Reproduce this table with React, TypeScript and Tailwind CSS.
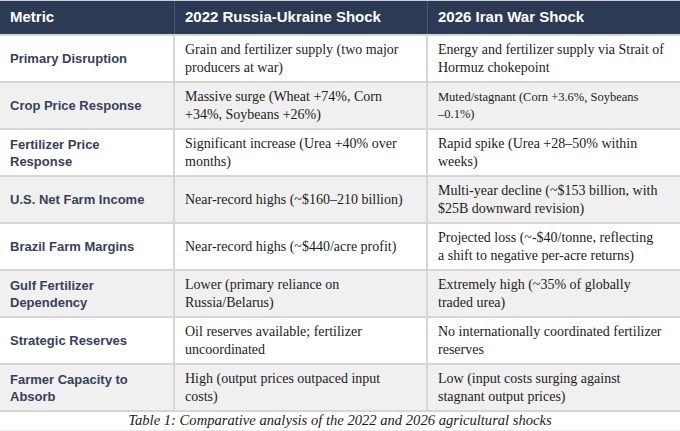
import React from "react";

type Row = { metric: string[]; a: string[]; b: string[]; bSmall?: boolean };

const rows: Row[] = [
  {
    metric: ["Primary Disruption"],
    a: ["Grain and fertilizer supply (two major", "producers at war)"],
    b: ["Energy and fertilizer supply via Strait of", "Hormuz chokepoint"],
  },
  {
    metric: ["Crop Price Response"],
    a: ["Massive surge (Wheat +74%, Corn", "+34%, Soybeans +26%)"],
    b: ["Muted/stagnant (Corn +3.6%, Soybeans", "\u20130.1%)"],
    bSmall: true,
  },
  {
    metric: ["Fertilizer Price", "Response"],
    a: ["Significant increase (Urea +40% over", "months)"],
    b: ["Rapid spike (Urea +28\u201350% within", "weeks)"],
  },
  {
    metric: ["U.S. Net Farm Income"],
    a: ["Near-record highs (~$160\u2013210 billion)"],
    b: ["Multi-year decline (~$153 billion, with", "$25B downward revision)"],
  },
  {
    metric: ["Brazil Farm Margins"],
    a: ["Near-record highs (~$440/acre profit)"],
    b: ["Projected loss (~-$40/tonne, reflecting", "a shift to negative per-acre returns)"],
  },
  {
    metric: ["Gulf Fertilizer", "Dependency"],
    a: ["Lower (primary reliance on", "Russia/Belarus)"],
    b: ["Extremely high (~35% of globally", "traded urea)"],
  },
  {
    metric: ["Strategic Reserves"],
    a: ["Oil reserves available; fertilizer", "uncoordinated"],
    b: ["No internationally coordinated fertilizer", "reserves"],
  },
  {
    metric: ["Farmer Capacity to", "Absorb"],
    a: ["High (output prices outpaced input", "costs)"],
    b: ["Low (input costs surging against", "stagnant output prices)"],
  },
];

const sans = "font-['Liberation_Sans',Arial,sans-serif]";
const serif = "font-['Liberation_Serif','Times_New_Roman',serif]";

function Lines({ lines }: { lines: string[] }) {
  return (
    <>
      {lines.map((l, i) => (
        <span key={i} className="block whitespace-nowrap">
          {l}
        </span>
      ))}
    </>
  );
}

export default function App() {
  return (
    <div className="w-[680px] h-[431px] bg-white overflow-hidden">
      <div className="flex flex-col border-t border-[#c9ccd2]">
        <div className={`flex h-[33px] bg-[#2c3a56] text-white font-bold text-[15px] ${sans}`}>
          <div className="w-[175px] flex items-center pl-[10px] border-r border-[#4a5671]">Metric</div>
          <div className="w-[253px] flex items-center pl-[10px] border-r border-[#4a5671]">2022 Russia-Ukraine Shock</div>
          <div className="flex-1 flex items-center pl-[10px]">2026 Iran War Shock</div>
        </div>
        {rows.map((r, i) => (
          <div
            key={i}
            className={`flex h-[47px] border-t-2 border-[#d6d6d6] ${i % 2 === 1 ? "bg-[#f0f0f0]" : "bg-white"}`}
          >
            <div
              className={`w-[175px] flex flex-col justify-center pl-[10px] border-r-2 border-[#d6d6d6] text-[13px] leading-[17px] font-bold text-[#36415b] ${sans}`}
            >
              <Lines lines={r.metric} />
            </div>
            <div
              className={`w-[253px] flex flex-col justify-center pl-[10px] border-r-2 border-[#d6d6d6] text-[14px] leading-[18px] text-[#1c1c1c] ${serif}`}
            >
              <Lines lines={r.a} />
            </div>
            <div
              className={`flex-1 flex flex-col justify-center pl-[10px] text-[#1c1c1c] ${serif} ${
                r.bSmall ? "text-[12.5px] leading-[17px]" : "text-[14px] leading-[18px]"
              }`}
            >
              <Lines lines={r.b} />
            </div>
          </div>
        ))}
        <div className="border-t-2 border-[#d6d6d6]" />
        <div className={`h-[17px] flex items-center justify-center italic text-[14.6px] text-[#1a1a1a] ${serif}`}>
          Table 1: Comparative analysis of the 2022 and 2026 agricultural shocks
        </div>
        <div className="h-[2px] bg-[#ededed] mt-[1px]" />
      </div>
    </div>
  );
}
